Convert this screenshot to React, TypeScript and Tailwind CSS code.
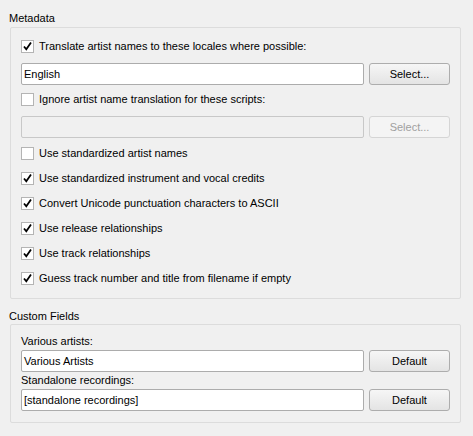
import React from "react";

const font = { fontFamily: "Tahoma, 'Liberation Sans', Arial, sans-serif" };

function CheckBox({ checked }: { checked: boolean }) {
  return (
    <div className="w-[13px] h-[13px] border border-[#b4b4b4] bg-white flex items-center justify-center shrink-0">
      {checked && (
        <svg width="11" height="11" viewBox="0 0 11 11">
          <path d="M2 5.5 L4.3 8.3 L9 1.5" stroke="#000" strokeWidth="1.8" fill="none" />
        </svg>
      )}
    </div>
  );
}

function CheckRow({ label, checked, className = "" }: { label: string; checked: boolean; className?: string }) {
  return (
    <div className={`h-[25px] flex items-center gap-[5px] ${className}`}>
      <CheckBox checked={checked} />
      <span>{label}</span>
    </div>
  );
}

function TextField({ value, disabled }: { value?: string; disabled?: boolean }) {
  return (
    <div
      className={`flex-1 h-[22px] rounded-[2px] border flex items-center px-[2px] ${
        disabled ? "bg-[#f0f0f0] border-[#c8c8c8]" : "bg-white border-[#acacac]"
      }`}
    >
      {value}
    </div>
  );
}

function Button({ label, disabled }: { label: string; disabled?: boolean }) {
  return (
    <div
      className={`w-[81px] h-[22px] rounded-[3px] border flex items-center justify-center ${
        disabled
          ? "border-[#d5d5d5] bg-[#f4f4f4] text-[#a0a0a0]"
          : "border-[#adadad] bg-gradient-to-b from-[#f6f6f6] to-[#e4e4e4]"
      }`}
    >
      {label}
    </div>
  );
}

const metadataOptions = [
  { label: "Use standardized artist names", checked: false },
  { label: "Use standardized instrument and vocal credits", checked: true },
  { label: "Convert Unicode punctuation characters to ASCII", checked: true },
  { label: "Use release relationships", checked: true },
  { label: "Use track relationships", checked: true },
  { label: "Guess track number and title from filename if empty", checked: true },
];

export default function App() {
  return (
    <div
      className="w-[473px] h-[436px] bg-[#f0f0f0] text-[11px] text-black pl-[10px] pr-[12px] overflow-hidden"
      style={font}
    >
      {/* Metadata */}
      <div className="pt-[10px] leading-[16px] -ml-[1px]">Metadata</div>
      <div className="mt-[1px] border border-[#dcdcdc] rounded-[2px] px-[10px] pt-[6px] pb-[7px]">
        <CheckRow label="Translate artist names to these locales where possible:" checked />
        <div className="mt-[4px] flex gap-[5px]">
          <TextField value="English" />
          <Button label="Select..." />
        </div>
        <CheckRow className="mt-[2px]" label="Ignore artist name translation for these scripts:" checked={false} />
        <div className="mt-[4px] flex gap-[5px]">
          <TextField disabled />
          <Button label="Select..." disabled />
        </div>
        <div className="mt-[3px]">
          {metadataOptions.map((o, i) => (
            <CheckRow key={i} label={o.label} checked={o.checked} />
          ))}
        </div>
      </div>

      {/* Custom Fields */}
      <div className="mt-[9px] leading-[16px] -ml-[1px]">Custom Fields</div>
      <div className="border border-[#dcdcdc] rounded-[2px] px-[10px] pt-[8px] pb-[11px]">
        <div className="h-[17px] flex items-center">Various artists:</div>
        <div className="flex gap-[5px]">
          <TextField value="Various Artists" />
          <Button label="Default" />
        </div>
        <div className="h-[17px] flex items-center">Standalone recordings:</div>
        <div className="flex gap-[5px]">
          <TextField value="[standalone recordings]" />
          <Button label="Default" />
        </div>
      </div>
    </div>
  );
}
